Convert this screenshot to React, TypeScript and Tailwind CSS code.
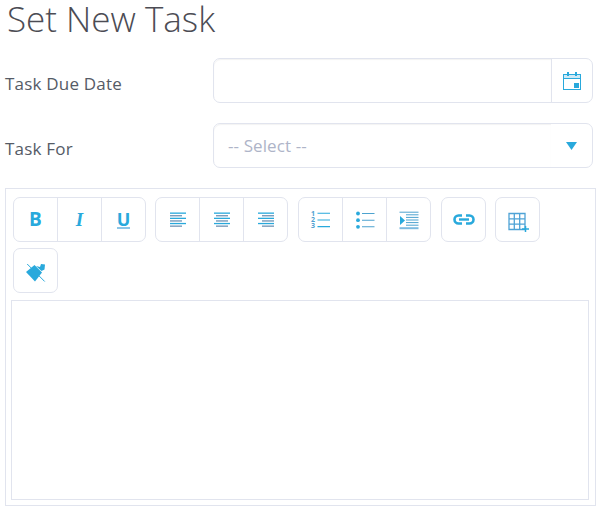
const BLUE = '#29a9dc'

function AlignIcon({ lines }: { lines: [number, number][] }) {
  return (
    <svg width="18" height="16" viewBox="0 0 18 16" fill="none">
      {lines.map(([x, w], i) => (
        <rect key={i} x={x} y={i * 2.6 + 0.5} width={w} height="1.3" fill={i % 2 === 0 ? '#29a9dc' : '#6f93b5'} />
      ))}
    </svg>
  )
}

function ToolButton({ children, divider }: { children: React.ReactNode; divider?: boolean }) {
  return (
    <div
      className={
        'flex h-[43px] items-center justify-center ' + (divider ? 'w-[44px] border-l border-[#e1e4ee]' : 'w-[43px]')
      }
    >
      {children}
    </div>
  )
}

function Group({ children }: { children: React.ReactNode }) {
  return <div className="flex h-[45px] rounded-[7px] border border-[#e1e4ee] bg-white">{children}</div>
}

function Letter({ children, className }: { children: React.ReactNode; className: string }) {
  return <span className={'text-[19px] leading-none text-[#29a9dc] ' + className}>{children}</span>
}

export default function App() {
  return (
    <div className="h-[514px] w-[601px] overflow-hidden bg-white font-['Open_Sans',sans-serif]">
      <h1 className="pl-[7px] text-[35px] leading-[38px] font-light text-[#4c4c54]">Set New Task</h1>

      <div className="mt-5 flex h-[45px] items-center pr-2 pl-[5px]">
        <label className="mt-[6px] w-[208px] text-[17px] tracking-[0.2px] text-[#555b66]">Task Due Date</label>
        <div className="flex h-[45px] flex-1 rounded-[7px] border border-[#e1e4ee] bg-white">
          <div className="flex-1 rounded-l-[7px] shadow-[inset_0_1px_1px_rgba(0,0,0,0.05)]" />
          <div className="flex w-[41px] items-center justify-center border-l border-[#e1e4ee]">
            <svg width="20" height="20" viewBox="0 0 20 20" fill="none">
              <rect x="1.5" y="3.5" width="17" height="15" stroke={BLUE} />
              <rect x="2" y="4" width="16" height="3" fill="#cfeaf6" />
              <path d="M1 7.5h18" stroke={BLUE} />
              <rect x="5" y="1" width="2" height="4" fill={BLUE} />
              <rect x="13" y="1" width="2" height="4" fill={BLUE} />
              <rect x="12" y="12" width="5" height="5" fill={BLUE} />
            </svg>
          </div>
        </div>
      </div>

      <div className="mt-5 flex h-[45px] items-center pr-2 pl-[5px]">
        <label className="mt-[6px] w-[208px] text-[17px] tracking-[0.2px] text-[#555b66]">Task For</label>
        <div className="flex h-[45px] flex-1 rounded-[7px] border border-[#e1e4ee] bg-white">
          <div className="flex flex-1 items-center rounded-l-[7px] pl-[14px] text-[17px] tracking-[0.1px] text-[#aeb4c8] shadow-[inset_0_1px_1px_rgba(0,0,0,0.05)]">
            -- Select --
          </div>
          <div className="flex w-[41px] items-center justify-center">
            <svg width="11" height="8" viewBox="0 0 11 8">
              <path d="M0 0h11L5.5 8z" fill={BLUE} />
            </svg>
          </div>
        </div>
      </div>

      <div className="mt-5 ml-[5px] h-[318px] w-[591px] border border-[#e1e4ee] pt-2 pl-[5px]">
        <div className="ml-[2px] flex w-[540px] flex-wrap gap-x-[9px] gap-y-[6px]">
          <Group>
            <ToolButton>
              <Letter className="font-bold">B</Letter>
            </ToolButton>
            <ToolButton divider>
              <Letter className="font-bold italic font-['Liberation_Serif',serif]">I</Letter>
            </ToolButton>
            <ToolButton divider>
              <span className="border-b-2 border-[#8cc6e8] text-[18px] leading-[16px] font-bold text-[#29a9dc]">U</span>
            </ToolButton>
          </Group>
          <Group>
            <ToolButton>
              <AlignIcon lines={[[1, 16], [1, 12], [1, 16], [1, 12], [1, 16], [1, 12]]} />
            </ToolButton>
            <ToolButton divider>
              <AlignIcon lines={[[1, 16], [3, 12], [1, 16], [3, 12], [1, 16], [3, 12]]} />
            </ToolButton>
            <ToolButton divider>
              <AlignIcon lines={[[1, 16], [5, 12], [1, 16], [5, 12], [1, 16], [5, 12]]} />
            </ToolButton>
          </Group>
          <div className="ml-px">
            <Group>
              <ToolButton>
                <div className="flex items-center gap-[2px]">
                  <div className="flex flex-col text-[7px] leading-[6px] font-bold text-[#4f9fd0]">
                    <span>1</span>
                    <span>2</span>
                    <span>3</span>
                  </div>
                  <svg width="13" height="18" viewBox="0 0 13 18" fill="none">
                    <path d="M0.5 2.3H13M0.5 9H13M0.5 15.6H13" stroke={BLUE} strokeWidth="1.1" />
                  </svg>
                </div>
              </ToolButton>
              <ToolButton divider>
                <svg width="20" height="21" viewBox="0 0 20 21" fill="none">
                  <circle cx="3" cy="4.5" r="1.9" fill={BLUE} />
                  <circle cx="3" cy="11.2" r="1.9" fill={BLUE} />
                  <circle cx="3" cy="17.8" r="1.9" fill={BLUE} />
                  <path d="M7 4.5h12.5M7 11.2h12.5M7 17.8h12.5" stroke="#4da3cf" strokeWidth="1.1" />
                </svg>
              </ToolButton>
              <ToolButton divider>
                <svg width="20" height="21" viewBox="0 0 20 21" fill="none">
                  <path d="M0.5 3.2h19M7 5.8h12.5M7 8.4h12.5M7 11h12.5M7 13.6h12.5M7 16.2h12.5" stroke="#4da3cf" />
                  <path d="M0.5 19.2h19" stroke="#7dbbe0" strokeWidth="2" />
                  <path d="M1 7l5 4.5-5 4.5z" fill={BLUE} />
                </svg>
              </ToolButton>
            </Group>
          </div>
          <div className="ml-px">
            <Group>
              <ToolButton>
                <svg width="22" height="11" viewBox="0 0 22 11" fill="none" stroke={BLUE}>
                  <path d="M9 1.5H5.5a4 4 0 0 0 0 8H9M13 1.5h3.5a4 4 0 0 1 0 8H13" strokeWidth="2.6" />
                  <path d="M6 5.5h10" strokeWidth="2.4" />
                </svg>
              </ToolButton>
            </Group>
          </div>
          <Group>
            <ToolButton>
              <svg width="24" height="26" viewBox="0 0 24 26" fill="none">
                <path d="M3 6.5h16v16H3zM3 11.8h16M3 17.2h16M8.3 6.5v16M13.7 6.5v16" stroke="#4fa3d6" strokeWidth="1.3" />
                <path d="M19.5 19v6M16 22h7" stroke={BLUE} strokeWidth="1.5" />
              </svg>
            </ToolButton>
          </Group>
          <Group>
            <ToolButton>
              <svg className="mt-1" width="20" height="20" viewBox="0 0 20 20" fill="none">
                <path d="M1.2 1l17.5 17.5" stroke={BLUE} />
                <path d="M0 9l8.5-7L16 9.5 9 18.5z" fill={BLUE} />
                <path d="M10 3l4 1 1-3 4 .5-.5 5-3 1.5z" fill={BLUE} />
              </svg>
            </ToolButton>
          </Group>
        </div>
        <div className="mt-[7px] h-[200px] w-[578px] border border-[#e1e4ee]" />
      </div>
    </div>
  )
}
